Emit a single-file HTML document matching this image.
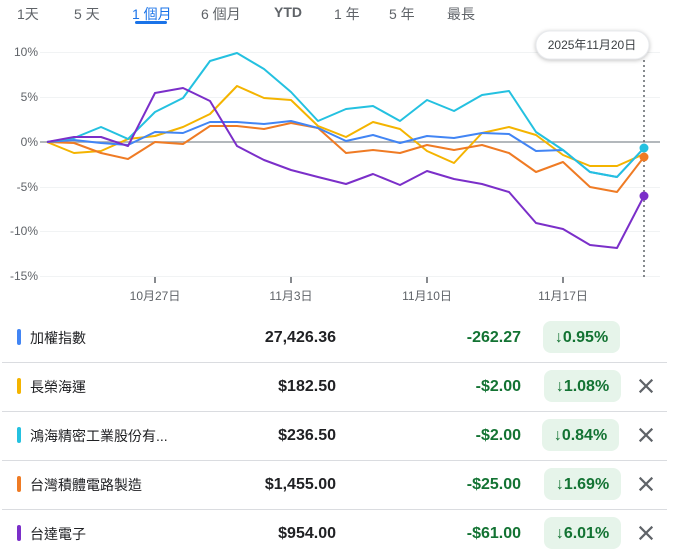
<!DOCTYPE html>
<html><head><meta charset="utf-8"><style>
*{margin:0;padding:0;box-sizing:border-box}
body{width:673px;height:556px;background:#fff;font-family:"Liberation Sans","Noto Sans CJK TC",sans-serif;position:relative;overflow:hidden;color:#202124}
.tab{position:absolute;top:4px;font-size:14px;color:#5f6368}
.row{position:absolute;left:0;width:673px;height:49px}
.bar{position:absolute;left:17px;top:16px;width:4px;height:16px;border-radius:2px}
.name{position:absolute;left:30px;top:15px;font-size:14px;color:#202124}
.price{position:absolute;right:337px;top:16px;font-size:16px;font-weight:bold;color:#202124}
.chg{position:absolute;right:152px;top:16px;font-size:16px;font-weight:bold;color:#137333}
.pill{position:absolute;left:544px;top:8px;width:77px;height:32px;border-radius:8px;background:#e6f4ea;color:#137333;font-size:16px;font-weight:bold;text-align:center;line-height:33px}
.x{position:absolute;left:637px;top:15px;width:18px;height:18px}
.sep{position:absolute;left:2px;width:665px;height:1px;background:#dadce0}
</style></head><body>
<div class="tab" style="left:17px">1天</div>
<div class="tab" style="left:74px">5 天</div>
<div class="tab" style="left:132px;color:#1a73e8">1 個月</div>
<div style="position:absolute;left:135px;top:21px;width:32px;height:3px;background:#1a73e8;border-radius:2px"></div>
<div class="tab" style="left:201px">6 個月</div>
<div class="tab" style="left:274px;font-weight:bold">YTD</div>
<div class="tab" style="left:334px">1 年</div>
<div class="tab" style="left:389px">5 年</div>
<div class="tab" style="left:447px">最長</div>

<svg style="position:absolute;left:0;top:0" width="673" height="310">
<g font-size="12" fill="#5f6368" font-family="Liberation Sans,sans-serif" text-anchor="end">
<text x="38" y="56">10%</text><text x="38" y="101">5%</text><text x="38" y="146">0%</text>
<text x="38" y="191">-5%</text><text x="38" y="235">-10%</text><text x="38" y="280">-15%</text>
</g>
<g stroke="#f1f3f4" stroke-width="1">
<line x1="40" y1="52.5" x2="660" y2="52.5"/><line x1="40" y1="97.5" x2="660" y2="97.5"/>
<line x1="40" y1="187.5" x2="660" y2="187.5"/><line x1="40" y1="231.5" x2="660" y2="231.5"/>
<line x1="40" y1="276.5" x2="660" y2="276.5"/>
</g>
<line x1="40" y1="142" x2="660" y2="142" stroke="#9aa0a6" stroke-width="1.5"/>
<g stroke="#5f6368" stroke-width="1.5"><line x1="155" y1="277" x2="155" y2="283"/><line x1="291" y1="277" x2="291" y2="283"/><line x1="427" y1="277" x2="427" y2="283"/><line x1="563" y1="277" x2="563" y2="283"/></g>
<g font-size="12" fill="#5f6368" text-anchor="middle" font-family="Liberation Sans,Noto Sans CJK TC,sans-serif">
<text x="155" y="300">10月27日</text><text x="291" y="300">11月3日</text><text x="427" y="300">11月10日</text><text x="563" y="300">11月17日</text>
</g>
<line x1="644" y1="60" x2="644" y2="277" stroke="#5f6368" stroke-width="1.5" stroke-dasharray="2,3"/>
<g fill="none" stroke-width="2" stroke-linejoin="round">
<polyline stroke="#f4b400" points="47,142 74,153 101,151 128,139 155,136 183,127 210,114 237,86 264,98 291,100 318,126 346,137 373,122 400,129 427,151 454,163 482,133 509,127 536,135 563,155 590,166 617,166 644,154"/>
<polyline stroke="#ef7b24" points="47,142 74,143 101,153 128,159 155,142 183,144 210,126 237,126 264,129 291,123 318,128 346,153 373,150 400,153 427,145 454,150 482,145 509,153 536,172 563,162 590,187 617,192 644,157"/>
<polyline stroke="#4285f4" points="47,142 74,140 101,143 128,145 155,132 183,133 210,122 237,122 264,124 291,121 318,128 346,141 373,135 400,143 427,136 454,138 482,133 509,134 536,151 563,150 590,172 617,177 644,148"/>
<polyline stroke="#24c1e0" points="47,142 74,138 101,127 128,139 155,112 183,98 210,61 237,53 264,69 291,92 318,121 346,109 373,106 400,121 427,100 454,111 482,95 509,91 536,132 563,150 590,172 617,177 644,148"/>
<polyline stroke="#7b2fc9" points="47,142 74,137 101,137 128,146 155,93 183,88 210,101 237,146 264,160 291,170 318,177 346,184 373,174 400,185 427,171 454,179 482,184 509,192 536,223 563,229 590,245 617,248 644,196"/>
</g>
<circle cx="644" cy="148" r="4.5" fill="#24c1e0"/>
<circle cx="644" cy="157" r="4.5" fill="#ef7b24"/>
<circle cx="644" cy="196" r="4.5" fill="#7b2fc9"/>
<rect x="536" y="31" width="113" height="28" rx="14" fill="#fff" stroke="#e8eaed" style="filter:drop-shadow(0 1px 2px rgba(0,0,0,.25))"/>
<text x="592" y="49" font-size="12" fill="#3c4043" text-anchor="middle" font-family="Liberation Sans,Noto Sans CJK TC,sans-serif">2025年11月20日</text>
</svg>

<div class="row" style="top:313px"><div class="bar" style="background:#4285f4"></div><div class="name">加權指數</div><div class="price">27,426.36</div><div class="chg">-262.27</div><div class="pill" style="left:543px">↓0.95%</div></div>
<div class="sep" style="top:362px"></div>
<div class="row" style="top:362px"><div class="bar" style="background:#f4b400"></div><div class="name">長榮海運</div><div class="price">$182.50</div><div class="chg">-$2.00</div><div class="pill">↓1.08%</div><svg class="x" viewBox="0 0 20 20"><path d="M3 3L17 17M17 3L3 17" stroke="#5f6368" stroke-width="2.4"/></svg></div>
<div class="sep" style="top:411px"></div>
<div class="row" style="top:411px"><div class="bar" style="background:#24c1e0"></div><div class="name">鴻海精密工業股份有...</div><div class="price">$236.50</div><div class="chg">-$2.00</div><div class="pill" style="left:542px">↓0.84%</div><svg class="x" viewBox="0 0 20 20"><path d="M3 3L17 17M17 3L3 17" stroke="#5f6368" stroke-width="2.4"/></svg></div>
<div class="sep" style="top:460px"></div>
<div class="row" style="top:460px"><div class="bar" style="background:#ef7b24"></div><div class="name">台灣積體電路製造</div><div class="price">$1,455.00</div><div class="chg">-$25.00</div><div class="pill">↓1.69%</div><svg class="x" viewBox="0 0 20 20"><path d="M3 3L17 17M17 3L3 17" stroke="#5f6368" stroke-width="2.4"/></svg></div>
<div class="sep" style="top:509px"></div>
<div class="row" style="top:509px"><div class="bar" style="background:#7b2fc9"></div><div class="name">台達電子</div><div class="price">$954.00</div><div class="chg">-$61.00</div><div class="pill">↓6.01%</div><svg class="x" viewBox="0 0 20 20"><path d="M3 3L17 17M17 3L3 17" stroke="#5f6368" stroke-width="2.4"/></svg></div>
</body></html>
